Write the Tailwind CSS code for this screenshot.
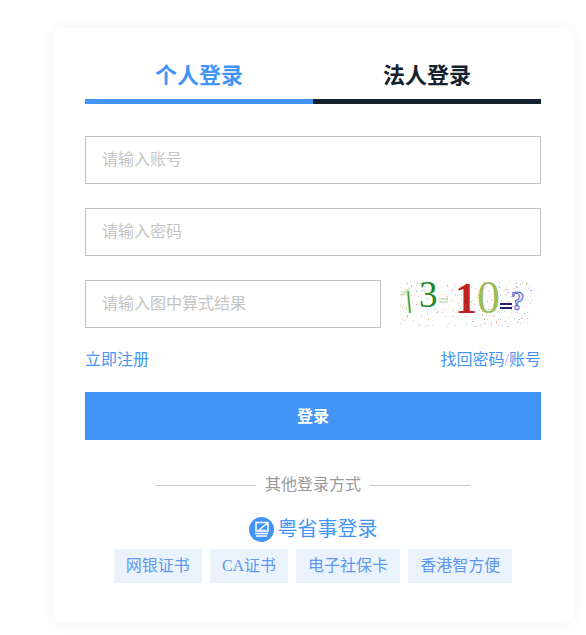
<!DOCTYPE html>
<html lang="zh-CN">
<head>
  <meta charset="UTF-8" />
  <meta name="viewport" content="width=device-width, initial-scale=1" />
  <title>登录</title>
  <script src="https://cdn.jsdelivr.net/npm/@tailwindcss/browser@4"></script>
</head>
<body class="bg-white h-[635px] overflow-hidden pt-[28px] pl-[53px] font-['Liberation_Serif','Noto_Sans_CJK_SC',serif]">
  <div class="w-[520px] h-[595px] bg-white rounded-[10px] shadow-[0_0_20px_rgba(0,0,0,0.06)] px-[32px] pt-[28px]">
    <!-- tabs -->
    <div class="flex">
      <div class="w-[228px] h-[48px] border-b-[5px] border-[#4295f7] text-center text-[22px] leading-[40px] font-bold text-[#4295f7]">个人登录</div>
      <div class="w-[228px] h-[48px] border-b-[5px] border-[#14212e] text-center text-[22px] leading-[40px] font-bold text-[#14212e]">法人登录</div>
    </div>

    <!-- form -->
    <div class="mt-[32px] flex flex-col gap-[24px]">
      <input class="w-full h-[48px] border border-[#c2c2c2] px-[16px] text-[16px] outline-none placeholder:text-[#c4c4c4]" placeholder="请输入账号" />
      <input class="w-full h-[48px] border border-[#c2c2c2] px-[16px] text-[16px] outline-none placeholder:text-[#c4c4c4]" placeholder="请输入密码" />
      <div class="flex items-center">
        <input class="w-[296px] h-[48px] border border-[#c2c2c2] px-[16px] text-[16px] outline-none placeholder:text-[#c4c4c4]" placeholder="请输入图中算式结果" />
        <svg id="captcha" class="ml-[19px] w-[134px] h-[48px] overflow-visible" viewBox="0 0 134 48">
          <g id="noise"></g>
          <path d="M1 16 L8 10 L10 33" fill="none" stroke="#cfe8c0" stroke-width="3" />
          <path d="M8 11 L10 33" fill="none" stroke="#3f9e3a" stroke-width="1.5" />
          <text x="19" y="27" font-size="37" fill="#1f8a2b" font-family="Liberation Serif">3</text>
          <path d="M39 19 H48 M39 22 H48" stroke="#9fd2a0" stroke-width="1.2" />
          <text x="55" y="33" font-size="44" font-weight="bold" fill="#bf2222" font-family="Liberation Serif">1</text>
          <text x="77" y="33" font-size="46" fill="#9cbc55" font-family="Liberation Serif">0</text>
          <path d="M100 24 H112 M100 28 H112" stroke="#2a1d6e" stroke-width="2" />
          <text x="111" y="30" font-size="27" font-weight="bold" fill="#dde2f8" stroke="#4a5cc4" stroke-width="0.9" font-family="Liberation Serif">?</text>
        </svg>
      </div>
    </div>

    <div class="mt-[20px] flex justify-between text-[16px] leading-[24px] text-[#4295f7]">
      <span>立即注册</span>
      <span>找回密码<span class="text-[#b9a9e8]">/</span>账号</span>
    </div>

    <button class="block w-full h-[48px] mt-[20px] pt-[2px] bg-[#4295f7] text-white text-[16px] font-bold">登录</button>

    <!-- other logins -->
    <div class="mt-[33px] flex items-center justify-center h-[24px]">
      <div class="w-[100px] h-px bg-[#c8c8c8]"></div>
      <span class="mx-[9px] text-[16px] text-[#999999]">其他登录方式</span>
      <div class="w-[100px] h-px bg-[#c8c8c8]"></div>
    </div>

    <div class="mt-[17px] flex items-center justify-center h-[30px]">
      <svg class="w-[25px] h-[25px] mr-[4px]" viewBox="0 0 25 25">
        <circle cx="12.5" cy="12.5" r="12.5" fill="#4295f7" />
        <path d="M7 5.5 H19 V14 H7 Z M18.5 6 L9.5 13.5 H16" fill="none" stroke="white" stroke-width="1.5" />
        <path d="M6 16.5 H19 M7 19 H18" stroke="white" stroke-width="1.5" />
      </svg>
      <span class="text-[20px] leading-[30px] text-[#4295f7]">粤省事登录</span>
    </div>

    <div class="mt-[5px] flex justify-center gap-[8px] text-[16px] text-[#5b98ee]">
      <span class="h-[34px] leading-[34px] px-[12px] bg-[#eaf2fb]">网银证书</span>
      <span class="h-[34px] leading-[34px] px-[12px] bg-[#eaf2fb]">CA证书</span>
      <span class="h-[34px] leading-[34px] px-[12px] bg-[#eaf2fb]">电子社保卡</span>
      <span class="h-[34px] leading-[34px] px-[12px] bg-[#eaf2fb]">香港智方便</span>
    </div>
  </div>

  <script>
    // speckle for the captcha, seeded so the picture stays the same
    const noise = document.getElementById('noise');
    const colors = ['#e66', '#6c6', '#66e', '#dd6', '#e8e', '#6dd', '#fa6', '#f99'];
    let seed = 7;
    function rnd() {
      seed = (seed * 16807) % 2147483647;
      return seed / 2147483647;
    }
    let dots = '';
    for (let i = 0; i < 340; i++) {
      const x = (rnd() * 132).toFixed(0);
      const y = (rnd() * 46 + 1).toFixed(0);
      const c = colors[Math.floor(rnd() * colors.length)];
      dots += '<rect x="' + x + '" y="' + y + '" width="1" height="1" fill="' + c + '" opacity="' + (0.3 + rnd() * 0.5).toFixed(2) + '" />';
    }
    noise.innerHTML = dots;
  </script>
</body>
</html>
